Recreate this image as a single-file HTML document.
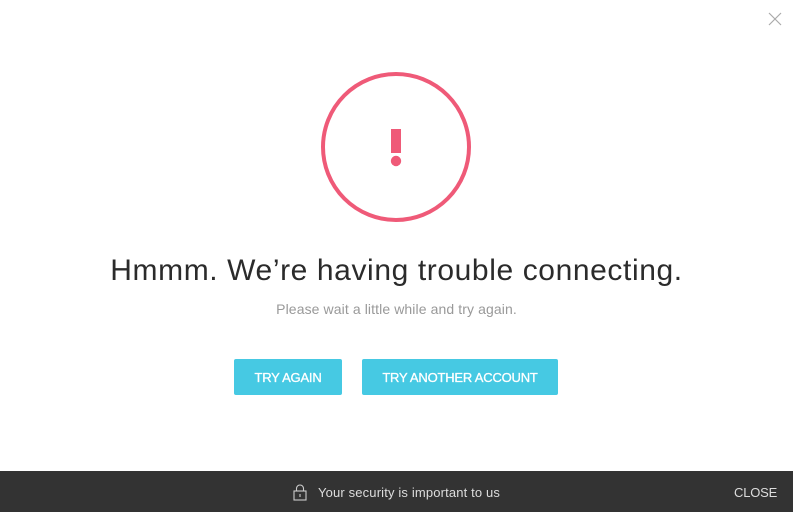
<!DOCTYPE html>
<html><head><meta charset="utf-8"><style>
html,body{margin:0;padding:0;width:793px;height:512px;background:#fff;overflow:hidden;font-family:"Liberation Sans",sans-serif;position:relative}
.x{position:absolute;left:768px;top:12px}
h1{position:absolute;left:0;width:793px;top:254px;margin:0;text-align:center;font-weight:normal;font-size:30px;color:#2b2b2b;letter-spacing:0.6px}
p{position:absolute;left:0;width:793px;top:301px;margin:0;text-align:center;font-size:14px;color:#999;letter-spacing:0.1px}
.btn{position:absolute;top:359px;height:36px;background:#46c9e3;color:#fff;font-size:13px;line-height:37px;text-align:center;border-radius:2px;letter-spacing:-0.2px;-webkit-text-stroke:0.3px #fff}
.foot{position:absolute;left:0;top:471px;width:793px;height:41px;background:#333}
.foot span{position:absolute;top:14px;color:#ddd;font-size:13px}
</style></head><body>
<svg class="x" width="14" height="14" viewBox="0 0 14 14"><path d="M1 1L13 13M13 1L1 13" stroke="#aaa" stroke-width="1.2"/></svg>
<svg style="position:absolute;left:319px;top:71px" width="154" height="154" viewBox="0 0 154 154">
<circle cx="77" cy="76" r="73" fill="none" stroke="#ef5a78" stroke-width="4"/>
<rect x="72" y="58" width="10" height="24" fill="#ef5a78"/>
<circle cx="77" cy="90" r="5.2" fill="#ef5a78"/>
</svg>
<h1>Hmmm. We’re having trouble connecting.</h1>
<p>Please wait a little while and try again.</p>
<div class="btn" style="left:234px;width:108px">TRY AGAIN</div>
<div class="btn" style="left:362px;width:196px">TRY ANOTHER ACCOUNT</div>
<div class="foot">
<svg style="position:absolute;left:293px;top:13px" width="14" height="17" viewBox="0 0 14 17"><path d="M3.5 7V4.5a3.5 3.5 0 0 1 7 0V7" fill="none" stroke="#ccc" stroke-width="1.1"/><rect x="1" y="7" width="12" height="9" fill="none" stroke="#ccc" stroke-width="1.1"/><path d="M7 10v3" stroke="#ccc" stroke-width="1.1"/></svg>
<span style="left:318px;letter-spacing:0.15px">Your security is important to us</span>
<span style="left:734px;letter-spacing:-0.2px">CLOSE</span>
</div>
</body></html>
